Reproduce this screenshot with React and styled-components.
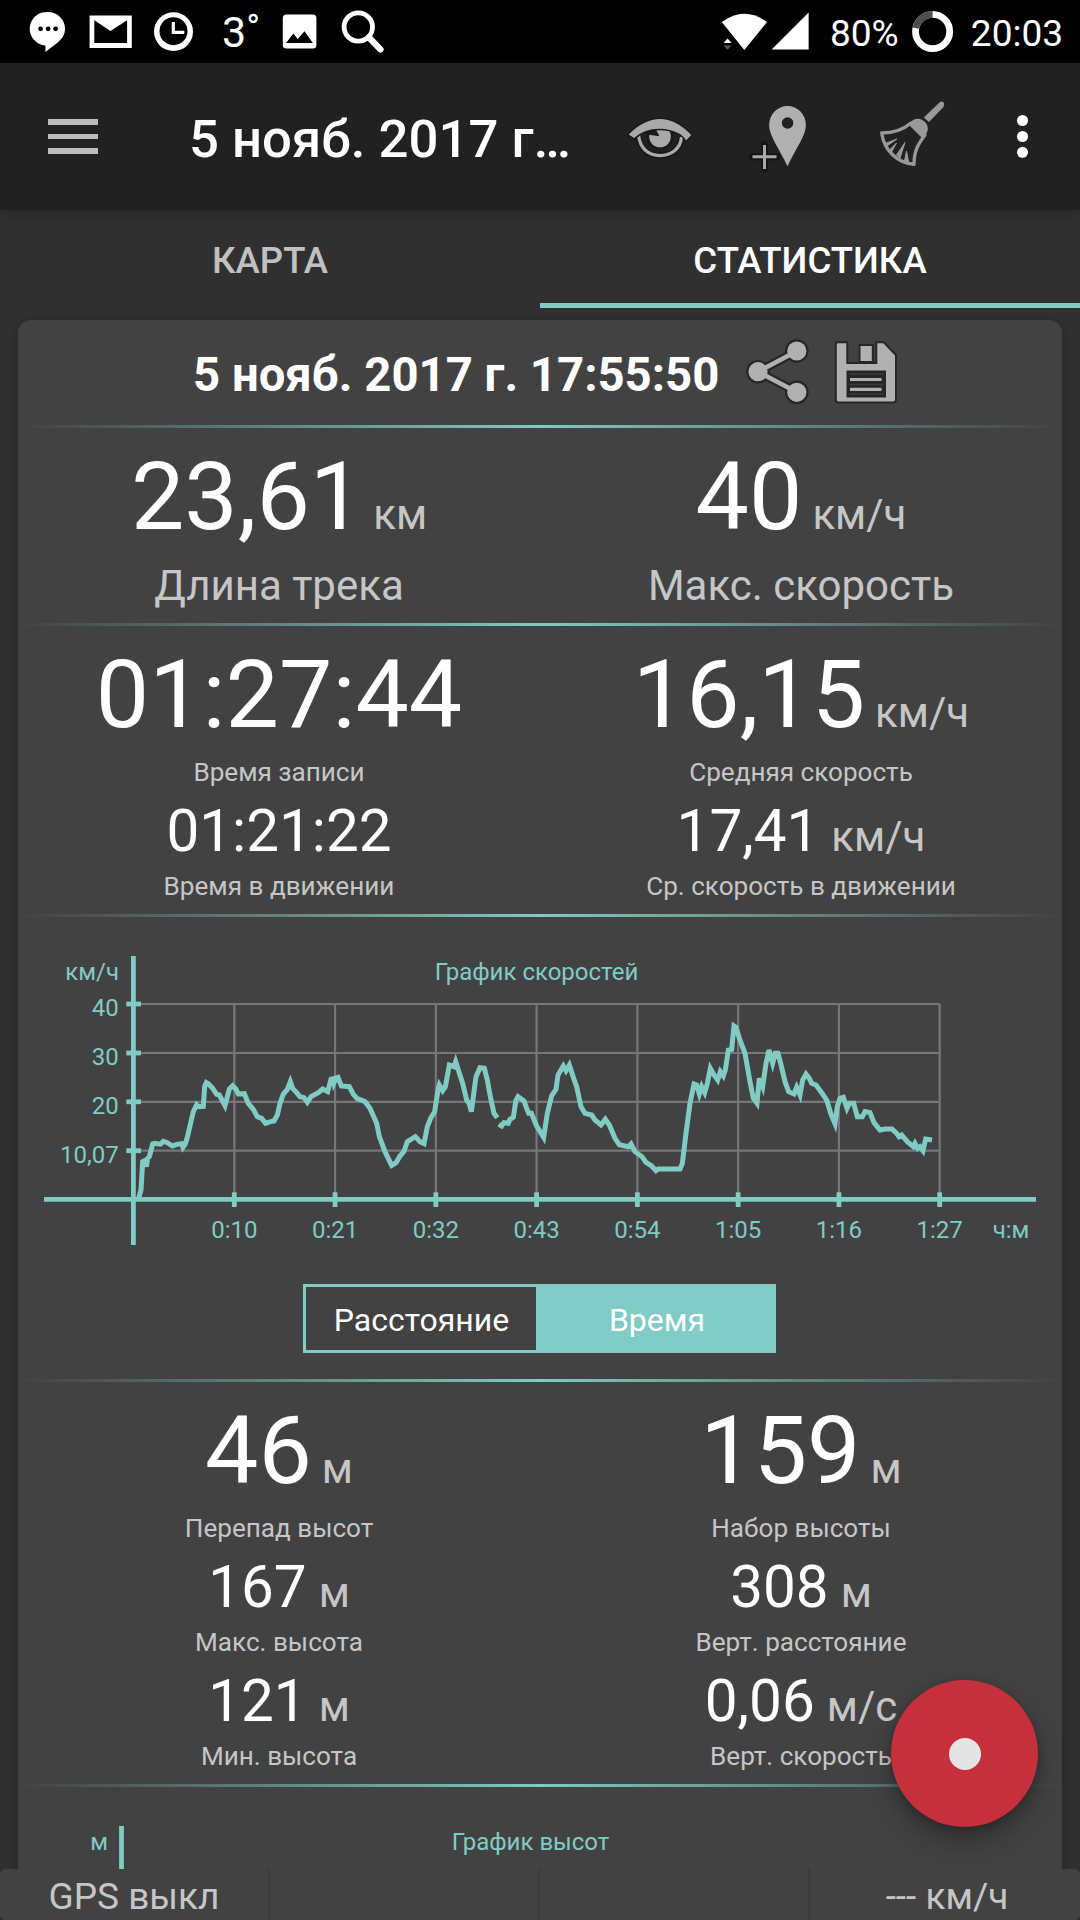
import React from 'react';
import styled, { createGlobalStyle } from 'styled-components';

const colors = {
  black: '#000',
  bar: '#212121',
  page: '#303030',
  card: '#424242',
  teal: '#80cbc4',
  white: '#fff',
  muted: '#c6c6c6',
  icon: '#b0b0b0',
  outline: '#1a1a1a',
  red: '#c5303c',
};

const GlobalStyle = createGlobalStyle`
  * {
    box-sizing: border-box;
  }

  body {
    margin: 0;
    background: ${colors.page};
    font-family: Roboto, 'Noto Sans', sans-serif;
  }

  svg {
    display: block;
    flex: none;
  }
`;

const Screen = styled.div`
  position: relative;
  display: flex;
  flex-direction: column;
  width: 1080px;
  height: 1920px;
  overflow: hidden;
  background: ${colors.page};
  color: ${colors.white};
`;

const StatusBar = styled.header`
  display: flex;
  flex: none;
  justify-content: space-between;
  height: 63px;
  padding: 0 17px 0 24px;
  background: ${colors.black};
`;

const StatusGroup = styled.div`
  display: flex;
  align-items: flex-start;
`;

const Temperature = styled.span`
  width: 62px;
  padding-left: 12px;
  font-size: 43px;
  line-height: 65px;
  white-space: nowrap;

  span {
    font-size: 37px;
    line-height: 1;
    vertical-align: 7px;
  }
`;

const StatusText = styled.span`
  width: ${props => props.$width}px;
  font-size: 37px;
  line-height: 67px;
  text-align: ${props => props.$align || 'left'};
  white-space: nowrap;
`;

const AppBar = styled.nav`
  display: flex;
  flex: none;
  align-items: center;
  height: 147px;
  padding-left: 48px;
  background: ${colors.bar};
  box-shadow: 0 2px 12px rgba(0, 0, 0, 0.25);
  z-index: 1;
`;

const MenuButton = styled.div`
  display: flex;
  flex-direction: column;
  gap: 9px;
  width: 141px;

  span {
    width: 50px;
    height: 5.6px;
    background: #bdbdbd;
  }
`;

const AppTitle = styled.h1`
  flex: none;
  width: 429px;
  margin: 4px 0 0;
  font-size: 52.7px;
  font-weight: 500;
  line-height: 64px;
  white-space: nowrap;
`;

const Tabs = styled.div`
  display: grid;
  flex: none;
  grid-template-rows: 98px;
  grid-template-columns: 1fr 1fr;
  height: 98px;
`;

const Tab = styled.div`
  height: 98px;
  border-bottom: 5px solid ${props => (props.$active ? colors.teal : 'transparent')};
  color: ${props => (props.$active ? colors.white : '#c1c1c1')};
  font-size: 36.6px;
  font-weight: 500;
  line-height: 101px;
  text-align: center;
`;

const Content = styled.main`
  flex: 1;
  min-height: 0;
  padding: 12px 18px 0;
  overflow: hidden;
`;

const Card = styled.section`
  height: 1700px;
  border-radius: 13px;
  background: ${colors.card};
  box-shadow: 0 2px 8px rgba(0, 0, 0, 0.25);
`;

const CardHeader = styled.div`
  display: flex;
  height: 105px;
  padding-left: 175px;
`;

const CardTitle = styled.h2`
  width: 545px;
  margin: 0;
  font-size: 47.3px;
  font-weight: 700;
  line-height: 111px;
  white-space: nowrap;
`;

const Divider = styled.div`
  height: 3px;
  background: linear-gradient(to right, rgba(128, 203, 196, 0), ${colors.teal}, rgba(128, 203, 196, 0));
`;

const StatGrid = styled.div`
  display: grid;
  grid-template-columns: 1fr 1fr;
  padding: 13px 0 11px;
`;

const StatColumn = styled.div`
  display: flex;
  flex-direction: column;
  align-items: center;
  white-space: nowrap;
`;

// the small label keeps 1px under it, so label and next value stay 10px apart
const Value = styled.div`
  margin-top: ${props => (props.$big ? 0 : 9)}px;
  font-size: ${props => (props.$big ? 95 : 58.4)}px;
  line-height: ${props => (props.$big ? 112 : 66)}px;
`;

const Unit = styled.span`
  margin-left: ${props => (props.$big ? 10 : 12)}px;
  color: ${colors.muted};
  font-size: 42px;
  line-height: 1;
`;

const Label = styled.div`
  margin: ${props => (props.$big ? '8px 0 2px' : `${props.$first ? 5 : 6}px 0 1px`)};
  color: ${colors.muted};
  font-size: ${props => (props.$big ? 42 : 26.1)}px;
  line-height: ${props => (props.$big ? 49 : 32)}px;
`;

const ChartSection = styled.div`
  height: 462px;
`;

const ChartText = styled.text`
  fill: ${colors.teal};
  font-size: 24px;
`;

const Toggle = styled.div`
  display: grid;
  grid-template-columns: 230px 1fr;
  width: 473px;
  height: 69px;
  margin: 0 0 0 285px;
  border: 3px solid ${colors.teal};
`;

const ToggleOption = styled.div`
  height: 63px;
  padding-left: ${props => (props.$active ? 5 : 1)}px;
  background: ${props => (props.$active ? colors.teal : 'transparent')};
  font-size: 32px;
  line-height: 66px;
  text-align: center;
`;

const BottomBar = styled.footer`
  display: grid;
  flex: none;
  grid-template-columns: repeat(4, 1fr);
  height: 51px;
  border-radius: 6px;
  background: ${colors.card};
  z-index: 1;
`;

const BottomCell = styled.div`
  padding-left: ${props => (props.$last ? 6 : 0)}px;
  border-right: 2px solid ${props => (props.$last ? 'transparent' : '#3b3b3b')};
  color: ${colors.muted};
  font-size: 37px;
  line-height: 56px;
  text-align: center;
`;

const RecordButton = styled.button`
  position: absolute;
  top: 1680px;
  left: 891px;
  display: flex;
  align-items: center;
  justify-content: center;
  width: 147px;
  height: 147px;
  padding: 0;
  border: 0;
  border-radius: 50%;
  background: ${colors.red};
  box-shadow: 0 14px 26px rgba(0, 0, 0, 0.28), 0 2px 8px rgba(0, 0, 0, 0.2);
  z-index: 2;

  span {
    width: 32px;
    height: 32px;
    border-radius: 50%;
    background: #e4e4e4;
  }
`;

// box is [x, y, width, height] in screen units, the drawing uses the same units
function Glyph({ box, children }) {
  return (
    <svg width={box[2]} height={box[3]} viewBox={box.join(' ')}>
      {children}
    </svg>
  );
}

function StatusIcons() {
  return (
    <StatusGroup>
      <Glyph box={[24, 0, 56, 63]}>
        <path d="M48 12a17 16.700 0 0 1 17 16.800c0 6-3 10-7 13.400L45.400 52v-6.600A17 16.700 0 0 1 48 12z" fill="#fff" />
        <g fill="#000">
          <circle cx="40.600" cy="28.800" r="2.400" />
          <circle cx="48.100" cy="28.800" r="2.400" />
          <circle cx="55.600" cy="28.800" r="2.400" />
        </g>
      </Glyph>
      <Glyph box={[80, 0, 63, 63]}>
        <path d="M89.600 15.600h42.200V48H89.600z" fill="#fff" />
        <path d="M94.300 20.300L110.500 31l16.600-10.700V43H94.300z" fill="#000" />
      </Glyph>
      <Glyph box={[143, 0, 67, 63]}>
        <ellipse cx="173.500" cy="31.700" rx="19.500" ry="19.400" fill="#fff" />
        <circle cx="173.500" cy="31.200" r="14" fill="#000" />
        <path d="M173.300 22v10.400h11" fill="none" stroke="#fff" strokeWidth="3.200" />
      </Glyph>
      <Temperature>3<span>°</span></Temperature>
      <Glyph box={[272, 0, 58, 63]}>
        <rect x="282.800" y="14.600" width="33.600" height="34" rx="3.500" fill="#fff" />
        <path d="M286 43l7.400-9.600 4.300 5.600 6.800-7.800 8.400 11.800z" fill="#000" />
      </Glyph>
      <Glyph box={[330, 0, 70, 63]}>
        <circle cx="358.300" cy="27" r="14.200" fill="none" stroke="#fff" strokeWidth="4.800" />
        <path d="M369 37.500L380.500 49.500" stroke="#fff" strokeWidth="6.200" strokeLinecap="round" />
      </Glyph>
    </StatusGroup>
  );
}

function SystemIcons() {
  return (
    <StatusGroup>
      <Glyph box={[715, 0, 55, 63]}>
        <path d="M721.800 22Q744.400 5.500 767 22L744.300 50z" fill="#fff" />
        <path d="M723.600 43l4-4.600 4 4.600z" fill="#fff" stroke="#000" strokeWidth="1" paintOrder="stroke" />
        <path d="M723.600 45.400l4 4.400 4-4.400z" fill="#555" />
      </Glyph>
      <Glyph box={[770, 0, 60, 63]}>
        <path d="M771.600 49.500h37V12.600z" fill="#fff" />
      </Glyph>
      <StatusText $width={82}>80%</StatusText>
      <Glyph box={[912, 0, 42, 63]}>
        <circle cx="932.600" cy="31.500" r="17.100" fill="none" stroke="#fff" strokeWidth="6.800" />
        <path d="M915.800 28.200A17.100 17.100 0 0 1 932.600 14.400" fill="none" stroke="#4d4d4d" strokeWidth="6.800" />
      </Glyph>
      <StatusText $width={109} $align="right">20:03</StatusText>
    </StatusGroup>
  );
}

function AppBarIcons() {
  return (
    <>
      <Glyph box={[618, 63, 122, 147]}>
        <path d="M638.500 137C640 149 649 155.600 660 155.600S680.500 149 682 137" fill="none" stroke={colors.outline} strokeWidth="7" />
        <circle cx="660" cy="136" r="14" fill={colors.outline} />
        <path d="M638.500 135C640 149 649 155.600 660 155.600S680.500 149 681.500 137" fill="none" stroke="#a9a9a9" strokeWidth="3.200" />
        <circle cx="660" cy="136.500" r="10.800" fill="#a9a9a9" />
        <path d="M647 134.500L659.500 136.300L653.500 125z" fill={colors.outline} />
        <path
          d="M628.700 134.500Q644 119 660 119T691.300 135L686 140.500Q684 136 678 133Q670 129 660 128.800Q645 128.500 634 138z"
          fill="#a9a9a9"
          stroke={colors.outline}
          strokeWidth="3"
          paintOrder="stroke"
        />
      </Glyph>
      <Glyph box={[740, 63, 130, 147]}>
        <path
          d="M787.500 106a18.400 19 0 0 1 18.400 19c0 11-10 23-18.400 41.300C779 148 769.100 136 769.100 125a18.400 19 0 0 1 18.400-19z"
          fill={colors.icon}
        />
        <circle cx="787.600" cy="123" r="5.800" fill={colors.bar} />
        <path d="M752.500 156.700H776.500M764.500 145V169" stroke="#141414" strokeWidth="7" strokeLinecap="round" />
        <path d="M752.500 156.700H776.500M764.500 145V169" stroke="#a8a8a8" strokeWidth="3" />
      </Glyph>
      <Glyph box={[870, 63, 130, 147]}>
        <path d="M939.500 102.500q3.500-2.500 4.800 1.500l-.8 3L929 122l-5.200-4.500z" fill="#999" />
        <path d="M908.500 124.500C914 117 921 117.500 925.500 122.500C929 127 929 132 922.500 138.500z" fill="#999" />
        <path
          d="M881.700 133C893 133 904 129 911 123M881.700 133C884 150 897 163 914 164.300M914 164.300C914 150 919 143 925 135"
          fill="none"
          stroke="#999"
          strokeWidth="3.300"
          strokeLinejoin="round"
          strokeLinecap="round"
        />
        <path d="M897 139L885 143.500l1.200 3zM896.500 143L888.500 151l2.500 2zM905 142.500L896.500 155l3.500 3zM906.500 151L904.500 161l4 .5z" fill="#999" stroke="#999" strokeWidth="1" />
      </Glyph>
      <Glyph box={[1000, 63, 80, 147]}>
        <g fill="#fff">
          <circle cx="1022.500" cy="120.500" r="5.500" />
          <circle cx="1022.500" cy="136.500" r="5.500" />
          <circle cx="1022.500" cy="152.300" r="5.500" />
        </g>
      </Glyph>
    </>
  );
}

function HeaderIcons() {
  const links = 'M797 351L758 371.700L797 392.300';
  const nodes = [[796.8, 351], [758, 371.7], [796.8, 392.3]];

  return (
    <>
      <Glyph box={[738, 320, 84, 105]}>
        <path d={links} fill="none" stroke="#262626" strokeWidth="9" />
        {nodes.map(([cx, cy]) => <circle key={cx + cy} cx={cx} cy={cy} r="11.800" fill="#262626" />)}
        <path d={links} fill="none" stroke={colors.icon} strokeWidth="4.600" />
        {nodes.map(([cx, cy]) => <circle key={cx + cy} cx={cx} cy={cy} r="9.600" fill={colors.icon} />)}
      </Glyph>
      <Glyph box={[822, 320, 90, 105]}>
        <path
          d="M837.500 343.300h8.800V364h31V343.300h6L895 355.500V399.500q0 2-2 2H838.500q-1.700 0-1.700-2V344z"
          fill={colors.icon}
          stroke="#262626"
          strokeWidth="4"
          strokeLinejoin="round"
          paintOrder="stroke"
        />
        <rect x="860.500" y="346" width="11.300" height="15" fill={colors.icon} stroke="#262626" strokeWidth="4" paintOrder="stroke" />
        <rect x="846.500" y="370.500" width="39.500" height="27" fill="#262626" />
        <path d="M849 374h34.500M849 384.500h34.500M849 394h34.500" stroke="#3c3c3c" strokeWidth="1.500" />
        <path d="M850 379.500h31.500M850 389.300h31.500" stroke={colors.icon} strokeWidth="3.200" />
      </Glyph>
    </>
  );
}

// speed trace, three units per pixel, each run of samples counted from its own left edge
const speedRuns = [
  {
    left: 30,
    points: '325,778 333,750 338,665 344,662 349,680 353,655 358,650 368,612 375,610 386,612 392,612 400,604 412,608 427,618 440,613 455,611 459,622 466,612 472,592 484,540 490,515 500,494 506,500 520,499 524,440 529,428 536,432 548,445 560,463 568,465 585,497 598,447 608,437 617,446 625,462 643,461 655,490 670,508 682,530 695,535 707,550 722,545 732,543 742,525 750,490 760,462 772,448 781,425 788,445 800,458 810,470 822,473 832,487 843,470 865,458 878,447 893,455 903,418 910,416 912,428 918,414 924,412 934,438 958,440 970,463 982,476 1005,485 1020,505 1040,550 1048,590 1065,635 1085,676 1098,668 1110,648 1122,634 1132,605 1156,590 1170,605 1182,611 1192,560 1202,535 1214,515 1224,450 1228,435 1238,452 1246,440 1258,375 1272,380 1277,365 1285,390 1298,430 1310,480 1318,492 1324,515 1338,410 1350,383 1363,385 1372,420 1382,475 1392,520 1402,533',
  },
  {
    left: 370,
    points: '386,553 395,558 402,548 415,550 420,538 430,532 438,480 444,470 462,483 470,505 476,520 484,520 500,558 521,592 532,520 545,467 558,448 564,405 580,378 588,392 598,375 610,412 620,440 633,500 645,520 665,525 675,540 693,555 706,538 718,555 735,595 748,614 775,620 783,612 795,635 816,650 828,667 845,678 858,692 865,687 930,687 937,670 948,580 960,490 972,432 980,435 988,462 995,440 1004,458 1012,430 1021,385 1032,405 1043,420 1051,395 1060,408 1066,390 1075,330 1085,328 1092,258 1098,262 1108,295 1125,340 1140,425 1150,475 1161,490 1168,415 1178,440 1188,370 1197,330 1208,370 1216,340 1224,340 1232,370 1245,425 1256,455 1272,462 1280,442 1290,465 1298,420 1308,402 1318,415 1325,430 1338,435 1355,458 1370,480 1382,520 1395,551 1402,500 1410,475 1420,472 1431,505 1438,490 1451,490 1462,530 1477,530 1485,515 1500,518 1512,548 1530,570 1546,567 1566,567 1580,580 1587,590 1595,585 1612,605 1630,620 1635,610 1643,625 1650,620 1659,632 1667,597 1686,600',
  },
];

const speedTicks = [
  { y: 1004, text: '40' },
  { y: 1053, text: '30' },
  { y: 1101.8, text: '20' },
  { y: 1150.7, text: '10,07' },
];

const timeTicks = ['0:10', '0:21', '0:32', '0:43', '0:54', '1:05', '1:16', '1:27'];

function SpeedChart() {
  const tickX = i => 234.3 + i * 100.77;

  return (
    <Glyph box={[18, 917, 1044, 367]}>
      <g stroke="#777" strokeWidth="2.200">
        {speedTicks.map(tick => <path key={tick.text} d={`M133 ${tick.y}H939.7`} />)}
        {timeTicks.map((text, i) => <path key={text} d={`M${tickX(i)} 1004V1199`} />)}
      </g>
      <g stroke={colors.teal} strokeWidth="4.800">
        <path d="M133.400 956V1245M44 1199.400H1036" />
        {speedTicks.map(tick => <path key={tick.text} d={`M126.3 ${tick.y}H141`} />)}
        {timeTicks.map((text, i) => <path key={text} d={`M${tickX(i)} 1192.3V1207`} />)}
      </g>
      {speedRuns.map(run => (
        <g key={run.left} transform={`translate(${run.left} 940) scale(${1 / 3})`}>
          <polyline points={run.points} fill="none" stroke={colors.teal} strokeWidth="15" />
        </g>
      ))}
      <ChartText x="119" y="980" textAnchor="end">км/ч</ChartText>
      <ChartText x="536.500" y="980" textAnchor="middle">График скоростей</ChartText>
      {speedTicks.map(tick => (
        <ChartText key={tick.text} x="118.800" y={tick.y + 12} textAnchor="end">{tick.text}</ChartText>
      ))}
      {timeTicks.map((text, i) => (
        <ChartText key={text} x={tickX(i)} y="1238" textAnchor="middle">{text}</ChartText>
      ))}
      <ChartText x="1011" y="1238" textAnchor="middle">ч:м</ChartText>
    </Glyph>
  );
}

function AltitudeChart() {
  return (
    <Glyph box={[18, 1787, 1044, 120]}>
      <path d="M121.500 1826V1907" stroke={colors.teal} strokeWidth="4.800" />
      <ChartText x="108" y="1850" textAnchor="end">м</ChartText>
      <ChartText x="530.500" y="1850" textAnchor="middle">График высот</ChartText>
    </Glyph>
  );
}

function Stats({ columns, bigLabels }) {
  return (
    <StatGrid>
      {columns.map(column => (
        <StatColumn key={column[0].label}>
          {column.map((stat, i) => (
            <React.Fragment key={stat.label}>
              <Value $big={i === 0}>
                {stat.value}
                {stat.unit ? <Unit $big={i === 0}>{stat.unit}</Unit> : null}
              </Value>
              <Label $big={bigLabels} $first={i === 0}>{stat.label}</Label>
            </React.Fragment>
          ))}
        </StatColumn>
      ))}
    </StatGrid>
  );
}

const summary = [
  [{ value: '23,61', unit: 'км', label: 'Длина трека' }],
  [{ value: '40', unit: 'км/ч', label: 'Макс. скорость' }],
];

const timing = [
  [
    { value: '01:27:44', label: 'Время записи' },
    { value: '01:21:22', label: 'Время в движении' },
  ],
  [
    { value: '16,15', unit: 'км/ч', label: 'Средняя скорость' },
    { value: '17,41', unit: 'км/ч', label: 'Ср. скорость в движении' },
  ],
];

const altitude = [
  [
    { value: '46', unit: 'м', label: 'Перепад высот' },
    { value: '167', unit: 'м', label: 'Макс. высота' },
    { value: '121', unit: 'м', label: 'Мин. высота' },
  ],
  [
    { value: '159', unit: 'м', label: 'Набор высоты' },
    { value: '308', unit: 'м', label: 'Верт. расстояние' },
    { value: '0,06', unit: 'м/с', label: 'Верт. скорость' },
  ],
];

function App() {
  return (
    <Screen>
      <GlobalStyle />
      <StatusBar>
        <StatusIcons />
        <SystemIcons />
      </StatusBar>
      <AppBar>
        <MenuButton>
          <span />
          <span />
          <span />
        </MenuButton>
        <AppTitle>5 нояб. 2017 г…</AppTitle>
        <AppBarIcons />
      </AppBar>
      <Tabs>
        <Tab>КАРТА</Tab>
        <Tab $active>СТАТИСТИКА</Tab>
      </Tabs>
      <Content>
        <Card>
          <CardHeader>
            <CardTitle>5 нояб. 2017 г. 17:55:50</CardTitle>
            <HeaderIcons />
          </CardHeader>
          <Divider />
          <Stats columns={summary} bigLabels />
          <Divider />
          <Stats columns={timing} />
          <Divider />
          <ChartSection>
            <SpeedChart />
            <Toggle>
              <ToggleOption>Расстояние</ToggleOption>
              <ToggleOption $active>Время</ToggleOption>
            </Toggle>
          </ChartSection>
          <Divider />
          <Stats columns={altitude} />
          <Divider />
          <AltitudeChart />
        </Card>
      </Content>
      <BottomBar>
        <BottomCell>GPS выкл</BottomCell>
        <BottomCell />
        <BottomCell />
        <BottomCell $last>--- км/ч</BottomCell>
      </BottomBar>
      <RecordButton aria-label="record">
        <span />
      </RecordButton>
    </Screen>
  );
}

export default App;
